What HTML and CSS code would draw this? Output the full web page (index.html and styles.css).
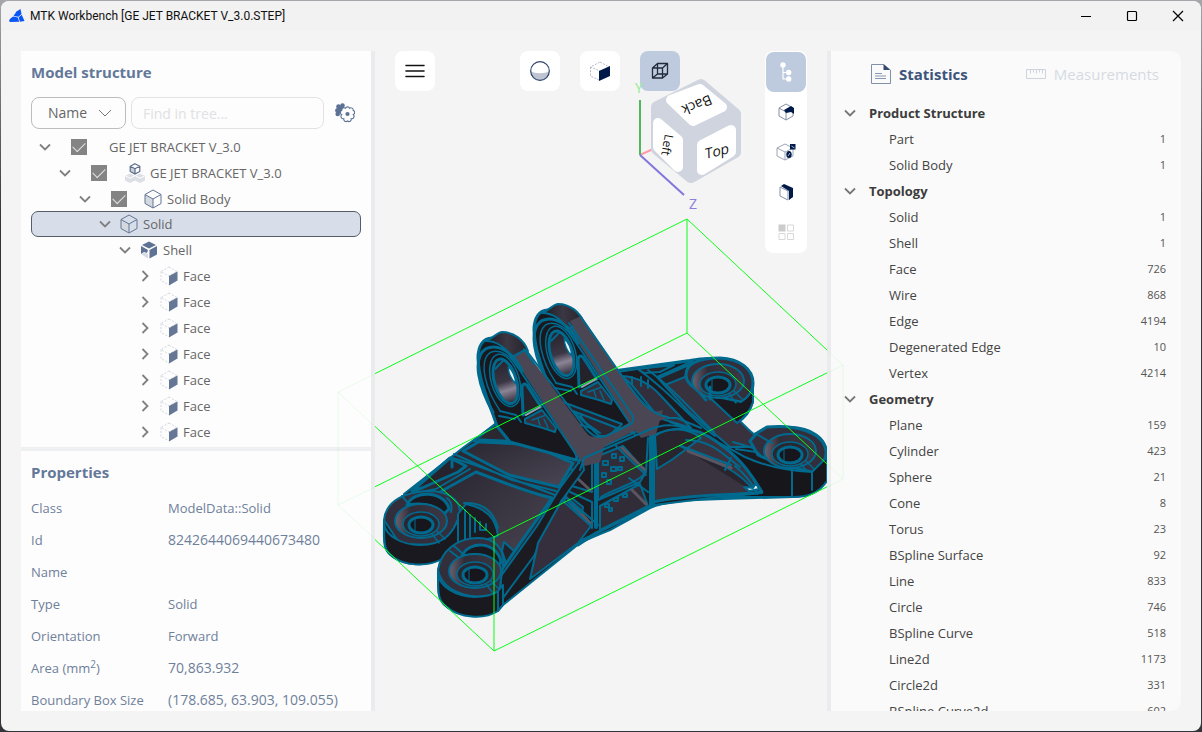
FILE: index.html
```html
<!DOCTYPE html>
<html lang="en">
<head>
<meta charset="utf-8">
<title>MTK Workbench</title>
<link rel="stylesheet" href="styles.css">
</head>
<body>
<svg width="0" height="0" class="defs" aria-hidden="true">
  <defs>
    <symbol id="down" viewBox="0 0 12 12"><path d="M1 3.5l5 5 5-5" fill="none" stroke="currentColor" stroke-width="1.8"/></symbol>
    <symbol id="right" viewBox="0 0 12 12"><path d="M3.500 1l5 5-5 5" fill="none" stroke="currentColor" stroke-width="1.800"/></symbol>
    <symbol id="solid" viewBox="0 0 18 20"><path d="M1 5.500L9 10v9l-8-4.500z" fill="#d5d9df"/><path d="M9 1l8 4.500v9L9 19l-8-4.500v-9zM1 5.500L9 10l8-4.500M9 10v9" fill="none" stroke="#627594" stroke-width="1" stroke-linejoin="round"/></symbol>
    <symbol id="shell" viewBox="0 0 18 20"><path d="M9 1.500l7 3.500-7 3.500L2 5z" fill="#5f7293"/><path d="M9.500 10l7.500-4v8.500l-7.500 4z" fill="#5f7293"/><path d="M1 6l7 4-1 3-3-1-3 2z" fill="#5f7293"/><path d="M1.500 14.500L4 12.500l4 1.500v4.500z" fill="#d8dce2"/></symbol>
    <symbol id="face" viewBox="0 0 18 20"><path d="M9 1l8 4.500L9 10 1 5.500zM1 5.500v9L9 19" fill="none" stroke="#d3d7de" stroke-dasharray="2 1.500"/><path d="M9 10l8.500-4.500v9L9 19.500z" fill="#657795"/></symbol>
    <symbol id="parts" viewBox="0 0 21 20"><path d="M6 10.500l5 2.500v4.500L6 20l-5-2.500V13zM16 10.500l5 2.500v4.500L16 20l-5-2.500V13z" fill="#dcdfe5"/><path d="M1.500 13L6 15.300l4.500-2.300M11.500 13l4.500 2.300 4.500-2.300" stroke="#fff" fill="none"/><path d="M6.500 3L11 5.500V11l-4.500-2.500z" fill="#c9cfda"/><path d="M11 .800l4.800 2.500v5.200L11 11 6.200 8.500V3.300zM6.200 3.300L11 5.700l4.800-2.400M11 5.700V11" fill="none" stroke="#5b6d8b" stroke-width="1.200"/></symbol>
  </defs>
</svg>
<div class="window">
  <header class="titlebar">
    <svg class="logo" viewBox="0 0 16 14"><path d="M7.500 2.500L11.500 0l1 5-3 2.800L4.500 7z" fill="#0a55f5"/><path d="M4 7.600l4.800.9 1.400 4.300L1 13c-1.500-1-.5-2.500.5-3.500zM9.600 8.500L12.700 5.700 15.500 12l-4.500.8z" fill="#0a55f5"/></svg>
    <h1 class="title">MTK Workbench [GE JET BRACKET V_3.0.STEP]</h1>
    <button class="wbtn" aria-label="Minimize"><svg viewBox="0 0 12 12"><path d="M1 6.500h10" stroke="#000"/></svg></button>
    <button class="wbtn" aria-label="Maximize"><svg viewBox="0 0 12 12"><rect x="1.500" y="1.500" width="9" height="9" rx="1" fill="none" stroke="#000" stroke-width="1.200"/></svg></button>
    <button class="wbtn" aria-label="Close"><svg viewBox="0 0 12 12"><path d="M1 1l10 10M11 1L1 11" stroke="#000" stroke-width="1.200"/></svg></button>
  </header>
  <main class="main">
    <aside class="left">
      <section class="panel structure">
        <h2 class="heading">Model structure</h2>
        <div class="filters">
          <div class="pick">
            <select aria-label="Search by"><option>Name</option></select>
            <svg class="pickmark" viewBox="0 0 12 12"><path d="M0 3l6 6 6-6" fill="none" stroke="#777"/></svg>
          </div>
          <input class="search" type="text" placeholder="Find in tree..." aria-label="Find in tree">
          <button class="gear" aria-label="Tree settings"><svg viewBox="0 0 20 20"><g fill="#5c7194"><circle cx="7.500" cy="2.600" r="2.300"/><circle cx="3.500" cy="3.500" r="2.300"/><circle cx="2.300" cy="7.500" r="2.200"/><circle cx="2.700" cy="11" r="2.300"/><circle cx="5.500" cy="6.500" r="4"/></g><g fill="#fdfdfd" stroke="#5c7194" stroke-width="1.100"><path d="M10.400 5.200a2.300 2.300 0 0 1 4.200 0 2.300 2.300 0 0 1 3.600 2.200 2.300 2.300 0 0 1 0 4.300 2.300 2.300 0 0 1-2 4 2.300 2.300 0 0 1-3.700 2.300 2.300 2.300 0 0 1-3.700-2.300 2.300 2.300 0 0 1-2-4 2.300 2.300 0 0 1 0-4.300 2.300 2.300 0 0 1 3.600-2.200z"/></g><circle cx="12.500" cy="11" r="2.100" fill="#5c7194"/></svg></button>
        </div>
        <ul class="tree">
          <li class="row l0"><button class="tw" aria-label="Collapse"><svg><use href="#down"/></svg></button><input type="checkbox" id="c1" checked><label for="c1" class="rootname">GE JET BRACKET V_3.0</label></li>
          <li class="row l1"><button class="tw" aria-label="Collapse"><svg><use href="#down"/></svg></button><input type="checkbox" id="c2" checked><svg class="ico parts"><use href="#parts"/></svg><label for="c2">GE JET BRACKET V_3.0</label></li>
          <li class="row l2"><button class="tw" aria-label="Collapse"><svg><use href="#down"/></svg></button><input type="checkbox" id="c3" checked><svg class="ico body"><use href="#solid"/></svg><label for="c3">Solid Body</label></li>
          <li class="row l3 selected"><button class="tw" aria-label="Collapse"><svg><use href="#down"/></svg></button><svg class="ico"><use href="#solid"/></svg><span>Solid</span></li>
          <li class="row l4"><button class="tw" aria-label="Collapse"><svg><use href="#down"/></svg></button><svg class="ico"><use href="#shell"/></svg><span>Shell</span></li>
          <li class="row l5"><button class="tw" aria-label="Expand"><svg><use href="#right"/></svg></button><svg class="ico"><use href="#face"/></svg><span>Face</span></li>
          <li class="row l5"><button class="tw" aria-label="Expand"><svg><use href="#right"/></svg></button><svg class="ico"><use href="#face"/></svg><span>Face</span></li>
          <li class="row l5"><button class="tw" aria-label="Expand"><svg><use href="#right"/></svg></button><svg class="ico"><use href="#face"/></svg><span>Face</span></li>
          <li class="row l5"><button class="tw" aria-label="Expand"><svg><use href="#right"/></svg></button><svg class="ico"><use href="#face"/></svg><span>Face</span></li>
          <li class="row l5"><button class="tw" aria-label="Expand"><svg><use href="#right"/></svg></button><svg class="ico"><use href="#face"/></svg><span>Face</span></li>
          <li class="row l5"><button class="tw" aria-label="Expand"><svg><use href="#right"/></svg></button><svg class="ico"><use href="#face"/></svg><span>Face</span></li>
          <li class="row l5"><button class="tw" aria-label="Expand"><svg><use href="#right"/></svg></button><svg class="ico"><use href="#face"/></svg><span>Face</span></li>
        </ul>
      </section>
      <section class="panel props">
        <h2 class="heading">Properties</h2>
        <table class="proptable">
          <tr><th>Class</th><td>ModelData::Solid</td></tr>
          <tr><th>Id</th><td class="num">8242644069440673480</td></tr>
          <tr><th>Name</th><td></td></tr>
          <tr><th>Type</th><td>Solid</td></tr>
          <tr><th>Orientation</th><td>Forward</td></tr>
          <tr><th>Area (mm<sup>2</sup>)</th><td class="num">70,863.932</td></tr>
          <tr><th>Boundary Box Size</th><td class="num">(178.685, 63.903, 109.055)</td></tr>
        </table>
      </section>
    </aside>
    <section class="viewport" aria-label="3D view">
      <svg class="scene" viewBox="375 51 452 660">
        <defs>
          <linearGradient id="plate" x1="0" y1="0" x2="1" y2="1"><stop offset="0" stop-color="#2a2731"/><stop offset="1" stop-color="#4a4654"/></linearGradient>
          <linearGradient id="bore" x1="0" y1="0" x2="0" y2="1"><stop offset="0" stop-color="#25222c"/><stop offset=".5" stop-color="#3a3644"/><stop offset=".7" stop-color="#8b8496"/><stop offset="1" stop-color="#2c2834"/></linearGradient>
          <linearGradient id="rim" x1="0" y1="0" x2="1" y2="0"><stop offset="0" stop-color="#1c1a21"/><stop offset=".5" stop-color="#3b3743"/><stop offset="1" stop-color="#25232b"/></linearGradient>
          <linearGradient id="cup" x1="0" y1="0" x2="1" y2="0"><stop offset="0" stop-color="#6a6270"/><stop offset=".3" stop-color="#302c38"/><stop offset="1" stop-color="#3c3744"/></linearGradient>
          <clipPath id="view"><rect x="375" y="51" width="452" height="660"/></clipPath>
          <g id="boss">
            <ellipse rx="26" ry="17" fill="url(#cup)" stroke-width="2"/>
            <ellipse cy="3" rx="18" ry="12" fill="#2a2731" stroke-width="1.500"/>
            <ellipse cy="4" rx="12" ry="8" fill="#17161c" stroke-width="3"/>
            <path d="M-6-1v10" fill="none" stroke-width="1"/>
            <path d="M11 13l7 9M16 10l8 8" stroke-width="1.500"/>
          </g>
          <g id="lug">
            <path d="M497 426C489 402 479 382 478 358c0-12 5-20 14-20 14 2 22 16 30 30l56 86-2 6-66-18z" fill="#19181e" stroke-width="3"/>
            <path d="M486 341c6-2 10-8 16-9 12 0 22 8 26 19l-15 9c-6-11-15-19-27-19z" fill="url(#rim)" stroke-width="2"/>
            <path d="M513 356l12-6 60 81c8 10 14 9 22 7l-7 24-15 4-8-11z" fill="#4b4654" stroke="none"/>
            <path d="M512 357l13-7M524 349l10 15M511 357l64 96 4 10" fill="none" stroke-width="2"/>
            <g transform="rotate(-17 503 380)" fill="none">
              <path d="M484 408C478 380 479 350 496 345c14-2 26 14 28 32" stroke-width="3"/>
              <path d="M491 408C484 385 484 355 499 350c11-1 19 10 22 23" stroke-width="1.500"/>
              <ellipse cx="505" cy="381" rx="14" ry="27" stroke-width="1.500"/>
              <ellipse cx="505" cy="382" rx="11" ry="23" fill="url(#bore)" stroke-width="3"/>
              <path d="M512 369c3 4 4 12 2 18-3-5-4-13-2-18z" fill="#edf5f7" stroke-width="1.500"/>
              <path d="M499 367l9-5" stroke-width="2"/>
            </g>
            <path d="M522 387c1-4 4-4 6 0l13 20-18 8z" fill="#25222b" stroke-width="3"/>
            <path d="M525 419l17-9 14 18-1 4-12-4-18-5z" fill="#342f3b" stroke-width="2"/>
            <path d="M532 420l14-5M540 425l-2-6M548 428l-4-9" stroke-width="1.500"/>
            <path d="M526 415l14-8" stroke="#a49dab" stroke-width="2"/>
            <path d="M500 411l16 4 5 7M499 416l16 3" fill="none" stroke-width="2"/>
          </g>
        </defs>
        <g clip-path="url(#view)">
          <g stroke="#006a8e" stroke-linejoin="round" stroke-linecap="round">
            <path d="M384 520L404 495 464 448 495 424 550 380 617 370 690 360C710 356 730 358 740 365 749 371 753 377 753 386V402C750 413 744 419 737 423L750 435 757 433 767 427 790 427C811 427 827 438 827 454V480C820 491 810 496 793 497L723 499C690 500 665 501 650 508L610 530C595 536 586 540 580 543L503 605C490 615 461 618 447 607 437 600 438 592 438 570L442 558C426 568 404 565 393 557 382 550 384 540 384 520z" fill="#1b1a20" stroke-width="2"/>
            <path d="M617 372l74-11 50 66 22 18c20 18 40 20 53 24v21l-30 5-68 2-64 8-20-64z" fill="#1d1b22" stroke-width="2"/>
            <path d="M657 377l36-16 14 28 41 40 20 18-38 0-42-36z" fill="#37323e" stroke-width="2"/>
            <path d="M638 369l36-4-14 7-16 1zM659 378l30-13-4 12-20 8z" fill="#25232b" stroke-width="2"/>
            <path d="M622 376c18 1 30 10 39 20l30 32-32-10-28-34z" fill="#332e3c" stroke-width="2"/>
            <path d="M639 370c34 24 52 50 76 66M648 370c30 22 46 44 66 62" fill="none" stroke-width="2"/>
            <path d="M632 377v7M641 377v9M648 380v8" fill="none" stroke-width="2"/>
            <path d="M686 375c0-12 13-17 34-17 20 1 33 11 33 25 0 10-6 16-12 19l-25-5-16-6c-8-4-14-9-14-16z" fill="#332e3b" stroke-width="3"/>
            <path d="M753 386v16c-3 10-9 16-16 21l-30-28 34 7c8-5 10-9 12-16z" fill="#1a1920" stroke-width="2"/>
            <use href="#boss" x="718" y="381"/>
            <path d="M700 393l6 7M710 387v12" fill="none" stroke-width="3"/>
            <path d="M750 441l7-8 10-6c30-3 57 6 59 24 1 10-6 16-14 21-20-4-38-9-54-17z" fill="#332e3b" stroke-width="3"/>
            <use href="#boss" x="790" y="451"/>
            <path d="M733 442l20 6 8 8M736 449l20 3M758 435l14 8" fill="none" stroke-width="2"/>
            <path d="M670 422c30 10 55 24 75 35 24 11 45 14 67 15l15-15v24c-9 13-20 16-34 16H723l39-4-8-14c-20-30-58-48-84-57z" fill="#17161b" stroke-width="2"/>
            <path d="M792 468v28M812 472v18" stroke-width="2"/>

            <path d="M653 436c30-14 50-6 72 12 18 13 28 30 37 44-34 4-70 2-109 10z" fill="#38333f" stroke-width="3"/>
            <path d="M655 436c14-10 34-8 46 2l-28 21-16 10zM680 446l44 20c18 10 28 21 33 28" fill="#28252e" stroke-width="2"/>
            <path d="M688 451l43 17" stroke="#5b5461" stroke-width="3"/>
            <path d="M681 446l50 19M686 440c28 0 40 18 54 27M731 458l-6 12M735 466c10 8 16 16 22 26" fill="none" stroke-width="2"/>
            <path d="M744 487l9 1 3-5 3 6-10 2z" fill="#e5f5f4" stroke-width="2"/>

            <path d="M578 458l64-29 12 6v70l-78 38-20-16z" fill="#211f26" stroke-width="2"/>
            <path d="M598 456l25-10 23 26-6 10-42 18zM600 506l40-22 8 22-48 24z" fill="#302c38" stroke-width="2"/>
            <path d="M622 448l23 22M632 490l14 14" stroke="#5b5461" stroke-width="3"/>
            <path d="M616 446l30 29M629 478l19 14M601 497c14-9 36-13 45-25l2-34" fill="none" stroke-width="2"/>
            <path d="M596 457v70M651 433v73" stroke-width="4"/>
            <path d="M578 470c3-6 8-9 14-9v31l-20-6zM570 492l22 10v26l-24-26" fill="#1d1b22" stroke-width="2"/>
            <path d="M576 477l14 13M572 503l18 20" stroke="#5b5461" stroke-width="3"/>
            <path d="M564 495l18 18 1-6-10-8" fill="#2f2b37" stroke-width="2"/>
            <g fill="none" stroke-width="2">
              <path d="M603 461h5v4h-5zM612 454h4v4h-4zM602 473h4v4h-4zM611 467h5v4h-5zM620 457h4v4h-4zM607 480h4v4h-4zM618 467h4v3h-4zM605 504h4v3h-4zM614 498h4v3h-4zM623 494h4v3h-4zM609 508h3v3h-3z"/>
            </g>

            <path d="M404 494l60-47 32-23 26 4 58 23c6 6 5 14 0 20l-70 96-12 36-40-70z" fill="#2d2933" stroke-width="2"/>
            <path d="M496 424l28-3 56 34v18l-56-24-50-8z" fill="#2b2832" stroke-width="2"/>
            <path d="M539 432c2 5-2 7 0 11M499 428l78 28" fill="none" stroke-width="2"/>
            <path d="M463 451l17-10 52 4 41 18-14 24-50-12z" fill="url(#plate)" stroke-width="3"/>
            <path d="M480 441l52 2 34 16" fill="none" stroke-width="5"/>
            <path d="M454 454l58 26 44 11M453 458l22 7 80 30" fill="none" stroke-width="2"/>
            <path d="M412 491l38-33 16 8-8 6-36 16z" fill="#26232c" stroke-width="3"/>
            <path d="M452 461v6" stroke-width="3"/>
            <path d="M440 492l36-20c24 9 50 20 76 26l-52 74-14-30-34-36z" fill="url(#plate)" stroke-width="3"/>
            <path d="M470 469l-34 20-20 4" fill="none" stroke-width="2"/>
            <path d="M560 488l22-30 2 12-22 30-28 56-34 46 1-26 36-50z" fill="#1d1b22" stroke-width="2"/>
            <path d="M562 500l29 26-13 17-48 36 8-36z" fill="#352f3d" stroke-width="2"/>
            <path d="M566 497l32 28" fill="none" stroke-width="2"/>
            <path d="M578 545l18-12 54-26" fill="none" stroke-width="3"/>

            <path d="M384 520c2-20 22-28 44-29 20 0 32 8 32 22-3 12-10 25-25 32l-35-1z" fill="#332e3b" stroke-width="2"/>
            <path d="M384 524c2 12 18 21 36 21 24 0 33-12 38-26v26l-16 14c-16 9-38 6-49-2-9-6-9-14-9-33z" fill="#1a191f" stroke-width="2"/>
            <path d="M407 505c7-16 38-14 42 4l-6 6c-8-12-24-12-36-10z" fill="#1a191f" stroke-width="3"/>
            <use href="#boss" x="421" y="521"/>
            <path d="M402 496l6 7M447 498c4 3 5 9 4 14" fill="none" stroke-width="2"/>

            <path d="M458 514l8-10c20 4 30 14 32 32l-16 5-24 11z" fill="#1d1b22" stroke-width="2"/>
            <path d="M465 510v30M470 515v22M475 518v14M480 522v8h6v-6M464 503c20-1 30 10 34 25" fill="none" stroke-width="2"/>
            <path d="M504 542l10 9-8 12-4-12z" fill="#24212a" stroke-width="2"/>
            <path d="M438 570c3-20 20-32 40-32 18 0 27 12 25 28l-4 26c-20 10-56 3-61-22z" fill="#332e3b" stroke-width="2"/>
            <path d="M438 574c2 13 17 22 36 23 11 0 19-2 24-6v20c-14 9-39 7-51-4-9-6-9-14-9-33zM498 591l5-6v20l-5 6z" fill="#1a191f" stroke-width="2"/>
            <path d="M462 556c7-16 35-15 39 6l-5 8c-8-14-20-16-34-14z" fill="#1a191f" stroke-width="3"/>
            <use href="#boss" x="475" y="571"/>
            <path d="M454 546l8 7M450 551l8 6" fill="none" stroke-width="2"/>

            <use href="#lug" x="56" y="-28"/>
            <path d="M552 398l70 26-10 10-70-20z" fill="#25222c" stroke-width="2"/>
            <path d="M573 411l44 17-8 8h-10zM580 414c3 8 10 12 20 19" fill="#2c2833" stroke-width="2"/>
            <use href="#lug"/>
            <path d="M570 321l11-5 36 52c18 24 29 45 51 50-35 10-56 26-86 39l-6-9 11-13c12 5 20 0 27-4l18-10z" fill="#4b4654" stroke="none"/>
            <path d="M569 323l64 93c1 4 0 7-4 9l-23 11c-10 3-14-1-20-7l-60-79M581 317l36 52c18 24 29 45 51 48M580 470l4-12 62-27c20-9 32-6 47 0" fill="none" stroke-width="2"/>
            <path d="M667 418h10l24 10" fill="none" stroke-width="2"/>
          </g>
        </g>
        <g fill="none" stroke="#0bff18" stroke-width="1" clip-path="url(#view)">
          <path d="M687 219L338 392V505L494 651 843 479V365zM687 219V333L338 505M687 333L843 479M494 651V537L338 392M494 537L843 365"/>
        </g>
        <g fill="none" stroke="#64f070" stroke-opacity=".14">
          <path d="M375 374l-37 18v113l37 34M338 392l35 33M338 505l37-18"/>
          <path d="M827 350l16 15v114l-16-15M827 373l16-8M827 487l16-8"/>
        </g>
      </svg>
      <div class="tools">
        <button class="tool" aria-label="Menu"><svg viewBox="0 0 20 20"><path d="M1 4.500h18M1 10h18M1 15.500h18" stroke="#111" stroke-width="1.600" stroke-linecap="round"/></svg></button>
        <div class="modes">
          <button class="tool" aria-label="Shading"><svg viewBox="0 0 20 20"><path d="M.5 10c4 3 15 3 19 0a9.500 9.500 0 0 1-19 0z" fill="#bfc5d0"/><circle cx="10" cy="10" r="9.300" fill="none" stroke="#33486e" stroke-width="1.200"/></svg></button>
          <button class="tool" aria-label="Faces"><svg viewBox="0 0 20 20"><path d="M10 1l9.500 5L10 10 .5 6zM.5 6v9l9.500 4.500" fill="none" stroke="#b3b8c3" stroke-dasharray="2 1.300"/><path d="M9 10l11-5v10L9 20z" fill="#001b49"/></svg></button>
          <button class="tool on" aria-label="Bounding box"><svg viewBox="0 0 20 20"><path d="M2.500 7h10v10h-10zM7.500 2.500h10V13h-10zM2.500 7l5-4.500M12.500 7l5-4.500M12.500 17l5-4M2.500 17l5-4" fill="none" stroke="#222c3b" stroke-width="1.300" stroke-linejoin="round"/></svg></button>
        </div>
        <div class="stack">
          <button class="tool on" aria-label="Tree"><svg viewBox="0 0 20 20"><g fill="#fff"><circle cx="7" cy="3" r="2.700"/><circle cx="12.700" cy="10.500" r="2.700"/><circle cx="12.700" cy="17" r="2.700"/></g><path d="M7 4v13h6M7 10.500h6" fill="none" stroke="#fff" stroke-width="1.200"/></svg></button>
          <button class="tool" aria-label="Section"><svg viewBox="0 0 20 20"><path d="M3 6l7-4 7 4v8l-7 4-7-4zM3 6l7 4 7-4M10 10v8" fill="#fff" stroke="#8490a6"/><path d="M8 8l7-4 3 2v6l-3-2-5 1z" fill="#001b49"/></svg></button>
          <button class="tool" aria-label="Explode"><svg viewBox="0 0 20 20"><path d="M1 6l8-4 8 4v8l-8 4-8-4zM1 6l8 4 8-4M9 10v8" fill="#fff" stroke="#9ca6b7"/><ellipse cx="13" cy="12.500" rx="2.700" ry="3.500" fill="#001b49"/><path d="M14 2h5.500v5.500H14z" fill="#001b49"/><path d="M15.500 4l3 2M12 14l2-3" stroke="#aeb9cb"/></svg></button>
          <button class="tool" aria-label="Clip"><svg viewBox="0 0 20 20"><path d="M4 5l8 4v9l-8-4z" fill="#fff" stroke="#8490a6"/><path d="M5 4l3-2 9 4v9l-4 3V9z" fill="#001b49"/></svg></button>
          <button class="tool" aria-label="Grid" disabled><svg viewBox="0 0 20 20"><rect x="3" y="3" width="6" height="6" fill="#ccc" stroke="#ccc"/><path d="M11.500 3h6v6h-6zM3 11.500h6v6H3zM11.500 11.500h6v6h-6z" fill="#fff" stroke="#d8d8d8"/></svg></button>
        </div>
      </div>
      <svg class="scene compass" viewBox="375 51 452 660">
        <path d="M640 155l13-6" stroke="#ff9ca8" stroke-width="2"/>
        <path d="M640 155v-55" stroke="#4fb85a" stroke-width="2"/>
        <path d="M640 155l44 40" stroke="#8276dc" stroke-width="2"/>
        <text x="639" y="93" class="axis y">Y</text>
        <text x="693" y="209" class="axis z">Z</text>
        <path d="M701 85l34 29v38l-44 25-34-28v-42z" fill="#cfd4de" stroke="#cfd4de" stroke-width="12" stroke-linejoin="round"/>
        <g fill="#fff" stroke="#fff" stroke-width="10" stroke-linejoin="round">
          <path d="M700 89l22 18-29 14-22-21z"/><path d="M658 123l20 17v27l-20-20z"/><path d="M702 145l29-15v22l-29 18z"/>
        </g>
        <text transform="translate(697 105) rotate(158)" class="side" dy="5">Back</text>
        <text transform="translate(667 145) rotate(100)" class="side small" dy="4">Left</text>
        <text transform="translate(717 151) rotate(-14) skewX(-12)" class="side" dy="5">Top</text>
      </svg>
    </section>
    <aside class="panel right">
      <div class="tabs" role="tablist">
        <button class="tab active" role="tab" aria-selected="true"><svg viewBox="0 0 20 20"><path d="M.5.5h12L19.500 6v13.500H.5z" fill="none" stroke="#8190aa"/><path d="M12.500 0v6H19z" fill="#34496e"/><path d="M4 9.500h7M4 12h11M4 14.500h11" stroke="#8998b1"/></svg>Statistics</button>
        <button class="tab" role="tab" aria-selected="false"><svg viewBox="0 0 20 20"><path d="M.5 5.500h19v9H.5zM4.500 5.500v4M7.500 5.500v3M10.500 5.500v4M13.500 5.500v3M16.500 5.500v4" fill="none" stroke="#ced4df"/></svg>Measurements</button>
      </div>
      <table class="stats">
        <tbody>
          <tr><th colspan="2"><button class="group"><svg><use href="#down"/></svg>Product Structure</button></th></tr>
          <tr><td>Part</td><td>1</td></tr>
          <tr><td>Solid Body</td><td>1</td></tr>
        </tbody>
        <tbody>
          <tr><th colspan="2"><button class="group"><svg><use href="#down"/></svg>Topology</button></th></tr>
          <tr><td>Solid</td><td>1</td></tr>
          <tr><td>Shell</td><td>1</td></tr>
          <tr><td>Face</td><td>726</td></tr>
          <tr><td>Wire</td><td>868</td></tr>
          <tr><td>Edge</td><td>4194</td></tr>
          <tr><td>Degenerated Edge</td><td>10</td></tr>
          <tr><td>Vertex</td><td>4214</td></tr>
        </tbody>
        <tbody>
          <tr><th colspan="2"><button class="group"><svg><use href="#down"/></svg>Geometry</button></th></tr>
          <tr><td>Plane</td><td>159</td></tr>
          <tr><td>Cylinder</td><td>423</td></tr>
          <tr><td>Sphere</td><td>21</td></tr>
          <tr><td>Cone</td><td>8</td></tr>
          <tr><td>Torus</td><td>23</td></tr>
          <tr><td>BSpline Surface</td><td>92</td></tr>
          <tr><td>Line</td><td>833</td></tr>
          <tr><td>Circle</td><td>746</td></tr>
          <tr><td>BSpline Curve</td><td>518</td></tr>
          <tr><td>Line2d</td><td>1173</td></tr>
          <tr><td>Circle2d</td><td>331</td></tr>
          <tr><td>BSpline Curve2d</td><td>602</td></tr>
        </tbody>
      </table>
    </aside>
  </main>
</div>
</body>
</html>
```
FILE: styles.css
```css
* { box-sizing: border-box; }
html, body { height: 100%; margin: 0; }
body {
  padding: 1px;
  background: linear-gradient(#a5a7ab, #33343a 30%, #33343a);
  font: 13px/26px "Open Sans", "Noto Sans", sans-serif;
  color: #444;
  overflow: hidden;
}
button, input, select { font: inherit; color: inherit; }
button { border: 0; padding: 0; background: none; }
h1, h2, ul, table { margin: 0; padding: 0; }
svg { display: block; }
.defs { position: absolute; }

.window {
  display: flex;
  flex-direction: column;
  height: 100%;
  border-radius: 8px;
  overflow: hidden;
  background: #f4f4f4;
}
.titlebar {
  display: flex;
  align-items: center;
  height: 30px;
  flex: none;
  padding-left: 8px;
  background: #f2f2f2;
}
.logo { width: 16px; height: 14px; }
.title {
  flex: 1;
  margin-left: 5px;
  font-family: Roboto, "Open Sans", sans-serif;
  font-size: 12px;
  font-weight: 400;
  line-height: 28px;
  color: #111;
}
.wbtn { width: 46px; height: 28px; display: grid; place-items: center; }
.wbtn svg { width: 12px; height: 12px; }

.main {
  flex: 1;
  min-height: 0;
  display: flex;
  padding: 20px;
}
.left {
  flex: 0 0 354px;
  min-width: 0;
  display: flex;
  flex-direction: column;
  gap: 4px;
  border-right: 4px solid #e9ebed;
  background: #eef0f1;
}
.panel { overflow: hidden; background: #fdfdfd; }
.structure { flex: none; padding: 10px 10px 2px; }
.props { flex: 1; min-height: 0; padding: 10px 10px 0; }
.heading {
  font-size: 15px;
  font-weight: 700;
  line-height: 22px;
  color: #637899;
}
.filters { display: flex; align-items: center; margin: 14px 0 5px; gap: 5px; }
.pick { display: grid; align-items: center; flex: 0 0 95px; color: #666; }
.pick > * { grid-area: 1 / 1; }
.pick select {
  appearance: none;
  height: 32px;
  width: 100%;
  padding: 0 16px;
  border: 1px solid #bdbdbd;
  border-radius: 8px;
  background: #fdfdfd;
  font-size: 14px;
}
.pickmark { justify-self: end; width: 12px; height: 12px; margin-right: 15px; pointer-events: none; }
.search {
  flex: 1;
  min-width: 0;
  height: 32px;
  padding: 0 11px;
  border: 1px solid #e2e2e2;
  border-radius: 8px;
  background: #fdfdfd;
  font-size: 14px;
}
.search::placeholder { color: #e0e1e3; }
.gear { width: 32px; height: 32px; display: grid; place-items: center; }
.gear svg { width: 20px; height: 20px; }

.tree { list-style: none; color: #666; }
.row { display: flex; align-items: center; height: 26px; border: 1px solid transparent; border-radius: 7px; }
.l0 { padding-left: 3px; }
.l1 { padding-left: 23px; }
.l2 { padding-left: 43px; }
.l3 { padding-left: 63px; }
.l4 { padding-left: 83px; }
.l5 { padding-left: 103px; }
.row.selected { margin-top: -1px; border-color: #555d69; background: #d7deea; }
.tw { width: 20px; height: 20px; display: grid; place-items: center; color: #808080; }
.tw svg { width: 12px; height: 12px; }
.row input {
  appearance: none;
  width: 16px;
  height: 16px;
  margin: 0 0 0 16px;
  background: #848484;
  display: grid;
  place-items: center;
}
.row input::before {
  content: "";
  width: 11px;
  height: 6px;
  border: solid #e3e3e3;
  border-width: 0 0 1px 1px;
  rotate: -45deg;
  translate: 0 -2px;
}
.ico { width: 18px; height: 20px; margin: 0 5px; flex: none; }
.ico.body { margin-left: 17px; }
.ico.parts { width: 21px; margin-left: 17px; }
.rootname { margin-left: 22px; }

.proptable { width: 100%; margin-top: 9px; border-collapse: collapse; color: #6f809b; }
.proptable th, .proptable td { height: 32px; padding: 0; text-align: left; font-weight: 400; line-height: 20px; white-space: nowrap; }
.proptable th { width: 137px; }
.proptable .num { font-size: 14px; }
.proptable sup { font-size: 10px; line-height: 0; }

.viewport {
  flex: 1;
  min-width: 0;
  display: grid;
  grid-template: minmax(0, 1fr) / minmax(0, 1fr);
}
.viewport > * { grid-area: 1 / 1; }
.scene { width: 100%; height: 100%; overflow: visible; z-index: 1; pointer-events: none; }
.compass { z-index: 3; }
.axis { font-size: 14px; text-anchor: middle; }
.axis.y { fill: #8dee91; }
.axis.z { fill: #8b80dc; }
.side { font-size: 14px; text-anchor: middle; fill: #111; }
.side.small { font-size: 12px; }
.tools {
  z-index: 2;
  display: flex;
  justify-content: space-between;
  align-items: flex-start;
  padding: 0 20px;
}
.modes { display: flex; gap: 20px; }
.tool { display: grid; place-items: center; width: 40px; height: 40px; border-radius: 8px; background: #fff; }
.tool.on { background: #becade; }
.tool svg { width: 20px; height: 20px; }
.stack { padding: 1px; border-radius: 8px; background: #fff; }

.right {
  flex: 0 0 354px;
  border-left: 4px solid #e9ebed;
  border-radius: 0 10px 10px 0;
  background: #fafafa;
}
.tabs { display: flex; justify-content: space-between; padding: 10px 22px 13px 40px; }
.tab { display: flex; align-items: center; gap: 8px; font-size: 15px; color: #d5dae2; }
.tab svg { width: 20px; height: 20px; }
.tab.active { font-weight: 700; color: #3d547b; }
.stats { width: 100%; border-collapse: collapse; }
.stats th, .stats td { height: 26px; padding: 0; text-align: left; }
.stats td:first-child { padding-left: 58px; }
.stats td:last-child { padding-right: 15px; text-align: right; font-size: 11px; color: #555; }
.group { display: flex; align-items: center; gap: 13px; margin-left: 13px; font-weight: 700; color: #3c3c3c; }
.group svg { width: 12px; height: 12px; color: #777; }
```
